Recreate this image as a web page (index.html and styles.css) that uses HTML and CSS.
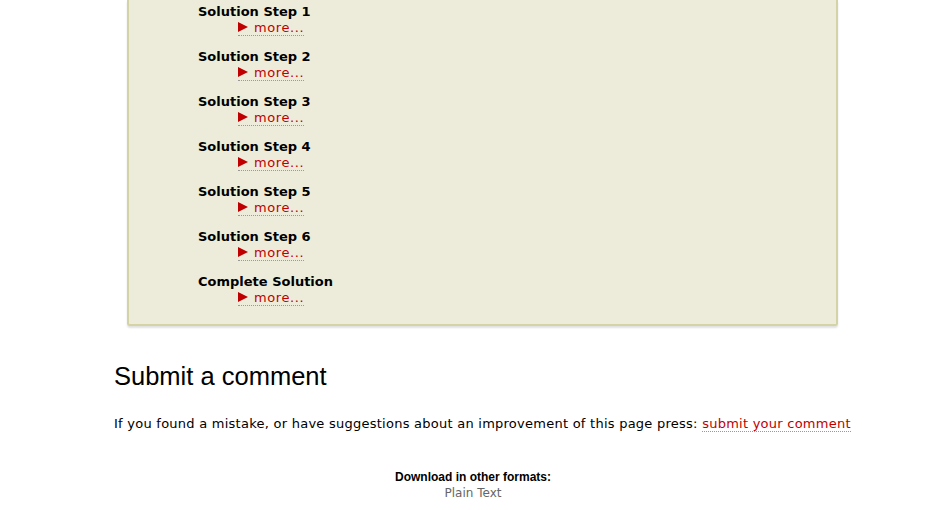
FILE: index.html
```html
<!DOCTYPE html>
<html>
<head>
<meta charset="utf-8">
<link rel="stylesheet" href="styles.css">
</head>
<body>
<div class="content">
  <div class="box">
    <dl class="steps">
      <dt>Solution Step 1</dt>
      <dd><a class="more" href="#"><span class="tri"></span>more...</a></dd>
      <dt>Solution Step 2</dt>
      <dd><a class="more" href="#"><span class="tri"></span>more...</a></dd>
      <dt>Solution Step 3</dt>
      <dd><a class="more" href="#"><span class="tri"></span>more...</a></dd>
      <dt>Solution Step 4</dt>
      <dd><a class="more" href="#"><span class="tri"></span>more...</a></dd>
      <dt>Solution Step 5</dt>
      <dd><a class="more" href="#"><span class="tri"></span>more...</a></dd>
      <dt>Solution Step 6</dt>
      <dd><a class="more" href="#"><span class="tri"></span>more...</a></dd>
      <dt>Complete Solution</dt>
      <dd><a class="more" href="#"><span class="tri"></span>more...</a></dd>
    </dl>
  </div>
  <h2 class="title">Submit a comment</h2>
  <p class="note">If you found a mistake, or have suggestions about an improvement of this page press: <a class="link" href="#">submit your comment</a></p>
</div>
<div class="formats">
  <h3>Download in other formats:</h3>
  <a href="#">Plain Text</a>
</div>
</body>
</html>
```
FILE: styles.css
```css
html, body {
  margin: 0;
  padding: 0;
  background: #fff;
}
body {
  font-family: "DejaVu Sans", Verdana, sans-serif;
  font-size: 13px;
  color: #000;
}
.content {
  padding-left: 114px;
  width: 760px;
}
.box {
  margin-left: 13px;
  width: 711px;
  background: #edecdb;
  border: 2px solid #d4d3a5;
  border-top: none;
  border-radius: 0 0 3px 3px;
  box-shadow: 0 2px 2px rgba(0,0,0,0.12);
  padding: 4px 0 5px 69px;
  box-sizing: border-box;
}
.steps {
  margin: 0;
}
.steps dt {
  font-weight: bold;
  line-height: 15px;
}
.steps dd {
  margin: 0 0 13px 40px;
  line-height: 17px;
}
.more {
  color: #c00000;
  text-decoration: none;
  border-bottom: 1px dotted #999;
  display: inline-block;
  line-height: 15px;
  letter-spacing: 0.6px;
}
.tri {
  display: inline-block;
  width: 0;
  height: 0;
  border-left: 10px solid #c00000;
  border-top: 5px solid transparent;
  border-bottom: 5px solid transparent;
  margin-right: 6px;
  vertical-align: 0;
}
.title {
  font-family: "Liberation Sans", Arial, sans-serif;
  font-weight: normal;
  font-size: 25.5px;
  margin: 35px 0 0 0;
  line-height: 30px;
}
.note {
  margin: 24px 0 0 0;
  line-height: 17px;
  letter-spacing: 0.25px;
  white-space: nowrap;
}
.link {
  color: #c00000;
  text-decoration: none;
  border-bottom: 1px dotted #999;
}
.formats {
  text-align: center;
  margin-top: 38px;
}
.formats h3 {
  margin: 0;
  font-family: "Liberation Sans", Arial, sans-serif;
  font-size: 12px;
  font-weight: bold;
  line-height: 15px;
}
.formats a {
  font-size: 12px;
  color: #666;
  text-decoration: none;
  line-height: 17px;
}
```
